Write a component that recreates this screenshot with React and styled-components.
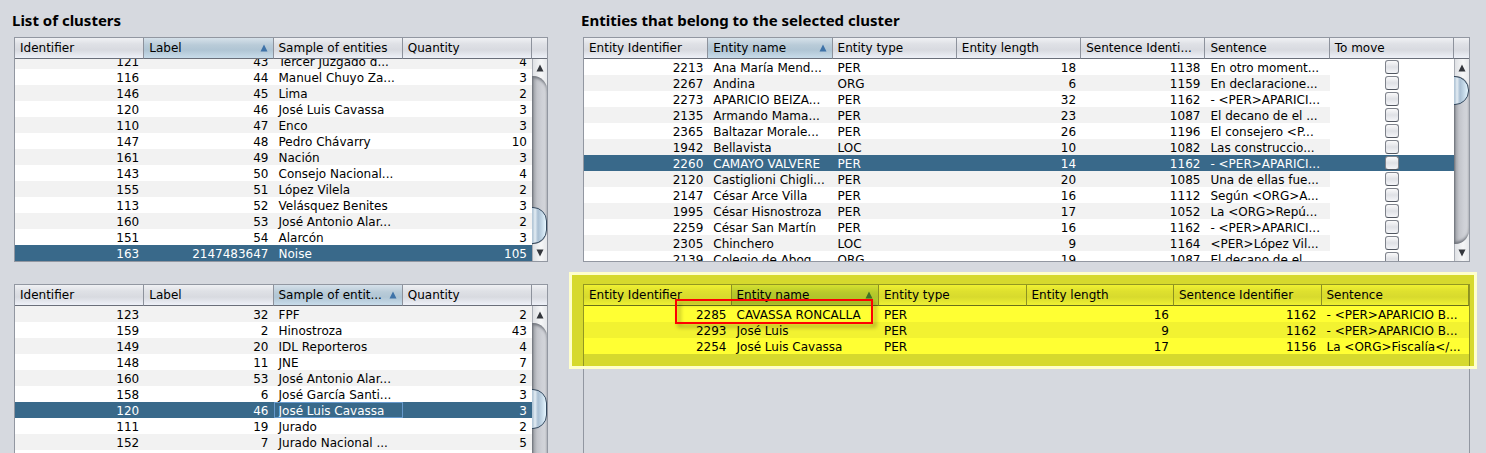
import React, { useLayoutEffect, useRef } from "react";
import styled, { createGlobalStyle, css } from "styled-components";

const GlobalStyle = createGlobalStyle`
  * { box-sizing: border-box; }
  body {
    margin: 0;
    height: 100vh;
    overflow: hidden;
    background: #d6d9df;
    color: #000;
    font: 12px/16px "DejaVu Sans", sans-serif;
  }
`;

const Page = styled.main`
  display: grid;
  grid-template-columns: 534fr 887fr;
  column-gap: 35px;
  padding: 9px 16px 0 14px;
`;

const Column = styled.section`
  display: flex;
  flex-direction: column;
  gap: 22px;
  min-width: 0;
`;

const Block = styled.div`
  display: flex;
  flex-direction: column;
`;

const Title = styled.h2`
  margin: 0 0 6px -2px;
  font: bold 15px/22px "Noto Sans", "Open Sans", sans-serif;
`;

const Pane = styled.div`
  position: relative;
  display: flex;
  height: ${(p) => p.$height}px;
  border: 1px solid #9297a1;
  background: ${(p) => (p.$plain ? "#d6d9df" : "#fff")};
`;

const Viewport = styled.div`
  flex: 1;
  min-width: 0;
  overflow: hidden;
`;

const Grid = styled.table`
  width: 100%;
  table-layout: fixed;
  border-collapse: separate;
  border-spacing: 0;
`;

const headFace = css`
  height: 21px;
  border-bottom: 1px solid #6a6f7a;
  background: linear-gradient(#f0f1f4 0%, #dfe1e6 30%, #d8dae0 60%, #eef1f8 100%);
`;

const HeadCell = styled.th`
  ${headFace}
  position: sticky;
  top: 0;
  z-index: 1;
  padding: 0 5px;
  border-right: 1px solid #8d929c;
  text-align: left;
  font-weight: normal;
  white-space: nowrap;
  ${(p) => p.$sorted && css`background: linear-gradient(#d6e1ea 0%, #b9cbd8 35%, #b0c5d4 60%, #c8dcea 100%);`}
`;

const HeadContent = styled.span`
  display: flex;
  align-items: center;
  justify-content: space-between;
  line-height: 20px;
`;

const Arrow = styled.svg`
  display: block;
  flex: none;
`;

const Row = styled.tr`
  height: 16px;
  background: ${(p) => (p.$shaded ? "#f2f2f2" : "#fff")};
  ${(p) => p.$selected && css`background: #39698a; color: #fff;`}
`;

const Cell = styled.td`
  height: 16px;
  padding: 2px 5px 0;
  text-align: ${(p) => (p.$number ? "right" : "left")};
  line-height: 14px;
  white-space: nowrap;
  ${(p) => p.$focused && css`outline: 1px solid #6699cc; outline-offset: -1px;`}
`;

const CheckCell = styled.td`
  padding: 0;
  height: 16px;
  background: ${(p) => (p.$selected ? "#39698a" : "#fff")};
  text-align: center;
`;

const Check = styled.input`
  appearance: none;
  display: block;
  width: 14px;
  height: 14px;
  margin: 1px auto;
  border: 1px solid #7f838c;
  border-bottom-color: #50555f;
  border-radius: 3px;
  background: linear-gradient(#fafafb, #dfe1e6 50%, #f4f5f8);
`;

const Side = styled.div`
  flex: none;
  display: flex;
  flex-direction: column;
  width: 15px;
  background: linear-gradient(90deg, #dcdee2, #f6f7f8 60%, #e6e8eb);
`;

const Corner = styled.div`
  ${headFace}
`;

const StepButton = styled.button`
  flex: none;
  display: flex;
  align-items: center;
  justify-content: center;
  height: 17px;
  padding: 0;
  border: 0;
  border-left: 1px solid #a9adb5;
  background: none;
`;

const Track = styled.div`
  position: relative;
  flex: 1;
  overflow: hidden;
  border-radius: 0 14px 14px 0;
  background: linear-gradient(90deg, #6f737b 0, #a5a8ae 2px, #c2c4ca 5px, #cfd1d7 10px, #d3d5da 100%);
  box-shadow: inset 0 3px 3px -1px #70747c, inset 0 -3px 3px -1px #70747c;
`;

const Thumb = styled.div`
  position: absolute;
  left: -10px;
  right: 0;
  top: ${(p) => p.$top}px;
  height: ${(p) => p.$size}px;
  border: 1px solid #34495e;
  border-radius: 0 14px 14px 0;
  background: linear-gradient(90deg, #b5c8d8 10px, #e4edf4 12px, #a9bfd3 15px, #c5d9e8 19px, #e6f6ff 23px);
`;

const Highlight = styled.div`
  position: absolute;
  z-index: 2;
  inset: -13px -8px auto -15px;
  height: 97px;
  background: #ffff33;
  mix-blend-mode: multiply;
  pointer-events: none;
`;

const HighlightEdge = styled(Highlight)`
  border: 3px solid #ffffcc;
  background: none;
  mix-blend-mode: normal;
`;

const Callout = styled.div`
  position: absolute;
  z-index: 3;
  top: 14px;
  left: 91px;
  width: 198px;
  height: 25px;
  border: 2px solid #f00;
  filter: drop-shadow(3px 3px 2px rgba(0, 0, 0, 0.4));
  pointer-events: none;
`;

function SortArrow() {
  return (
    <Arrow width="8" height="8" viewBox="0 0 8 8" aria-hidden="true">
      <path d="M4 0.5 L7.5 7.5 H0.5 Z" fill="#3f73a8" />
    </Arrow>
  );
}

function ScrollBar({ top, size }) {
  return (
    <Side>
      <Corner />
      <StepButton type="button" aria-label="Scroll up">
        <svg width="8" height="8" viewBox="0 0 8 8"><path d="M4 0.5 L7.5 7.5 H0.5 Z" fill="#33363c" /></svg>
      </StepButton>
      <Track>
        <Thumb $top={top} $size={size} />
      </Track>
      <StepButton type="button" aria-label="Scroll down">
        <svg width="8" height="8" viewBox="0 0 8 8"><path d="M4 7.5 L7.5 0.5 H0.5 Z" fill="#33363c" /></svg>
      </StepButton>
    </Side>
  );
}

function DataPane({ label, height, columns, sorted, rows, numbers, selected, focused, checks, oddShaded, atEnd, scroll, plain, children }) {
  const view = useRef(null);
  useLayoutEffect(() => {
    if (atEnd) view.current.scrollTop = view.current.scrollHeight;
  }, [atEnd]);
  return (
    <Pane $height={height} $plain={plain}>
      <Viewport ref={view}>
        <Grid aria-label={label}>
          <thead>
            <tr>
              {columns.map((name, i) => (
                <HeadCell key={name} $sorted={i === sorted} scope="col">
                  <HeadContent>
                    {name}
                    {i === sorted && <SortArrow />}
                  </HeadContent>
                </HeadCell>
              ))}
            </tr>
          </thead>
          <tbody>
            {rows.map((row, r) => (
              <Row key={row[0]} $shaded={(r % 2 === 1) === !!oddShaded} $selected={r === selected}>
                {row.map((value, c) => (
                  <Cell key={c} $number={numbers.includes(c)} $focused={r === selected && c === focused}>
                    {value}
                  </Cell>
                ))}
                {checks && (
                  <CheckCell $selected={r === selected}>
                    <Check type="checkbox" aria-label={`Move ${row[1]}`} />
                  </CheckCell>
                )}
              </Row>
            ))}
          </tbody>
        </Grid>
      </Viewport>
      {scroll && <ScrollBar {...scroll} />}
      {children}
    </Pane>
  );
}

const clusterColumns = ["Identifier", "Label", "Sample of entities", "Quantity"];

const clusters = [
  [121, 43, "Tercer Juzgado d...", 4],
  [116, 44, "Manuel Chuyo Za...", 3],
  [146, 45, "Lima", 2],
  [120, 46, "José Luis Cavassa", 3],
  [110, 47, "Enco", 3],
  [147, 48, "Pedro Chávarry", 10],
  [161, 49, "Nación", 3],
  [143, 50, "Consejo Nacional...", 4],
  [155, 51, "López Vilela", 2],
  [113, 52, "Velásquez Benites", 3],
  [160, 53, "José Antonio Alar...", 2],
  [151, 54, "Alarcón", 3],
  [163, 2147483647, "Noise", 105],
];

const targets = [
  [123, 32, "FPF", 2],
  [159, 2, "Hinostroza", 43],
  [149, 20, "IDL Reporteros", 4],
  [148, 11, "JNE", 7],
  [160, 53, "José Antonio Alar...", 2],
  [158, 6, "José García Santi...", 3],
  [120, 46, "José Luis Cavassa", 3],
  [111, 19, "Jurado", 2],
  [152, 7, "Jurado Nacional ...", 5],
];

const entities = [
  [2213, "Ana María Mend...", "PER", 18, 1138, "En otro moment..."],
  [2267, "Andina", "ORG", 6, 1159, "En declaracione..."],
  [2273, "APARICIO BEIZA...", "PER", 32, 1162, "- <PER>APARICI..."],
  [2135, "Armando Mama...", "PER", 23, 1087, "El decano de el ..."],
  [2365, "Baltazar Morale...", "PER", 26, 1196, "El consejero <P..."],
  [1942, "Bellavista", "LOC", 10, 1082, "Las construccio..."],
  [2260, "CAMAYO VALVERE", "PER", 14, 1162, "- <PER>APARICI..."],
  [2120, "Castiglioni Chigli...", "PER", 20, 1085, "Una de ellas fue..."],
  [2147, "César Arce Villa", "PER", 16, 1112, "Según <ORG>A..."],
  [1995, "César Hisnostroza", "PER", 17, 1052, "La <ORG>Repú..."],
  [2259, "César San Martín", "PER", 16, 1162, "- <PER>APARICI..."],
  [2305, "Chinchero", "LOC", 9, 1164, "<PER>López Vil..."],
  [2139, "Colegio de Abog...", "ORG", 19, 1087, "El decano de el ..."],
];

const members = [
  [2285, "CAVASSA RONCALLA", "PER", 16, 1162, "- <PER>APARICIO B..."],
  [2293, "José Luis", "PER", 9, 1162, "- <PER>APARICIO B..."],
  [2254, "José Luis Cavassa", "PER", 17, 1156, "La <ORG>Fiscalía</..."],
];

export default function App() {
  return (
    <>
      <GlobalStyle />
      <Page>
        <Column>
          <Block>
            <Title>List of clusters</Title>
            <DataPane
              label="List of clusters"
              height={225}
              columns={clusterColumns}
              sorted={1}
              rows={clusters}
              numbers={[0, 1, 3]}
              selected={12}
              atEnd
              scroll={{ top: 131, size: 37 }}
            />
          </Block>
          <DataPane
            label="Target clusters"
            height={225}
            columns={["Identifier", "Label", "Sample of entit...", "Quantity"]}
            sorted={2}
            rows={targets}
            numbers={[0, 1, 3]}
            selected={6}
            focused={2}
            scroll={{ top: 66, size: 40 }}
          />
        </Column>
        <Column>
          <Block>
            <Title>Entities that belong to the selected cluster</Title>
            <DataPane
              label="Entities of the selected cluster"
              height={225}
              columns={["Entity Identifier", "Entity name", "Entity type", "Entity length", "Sentence Identi...", "Sentence", "To move"]}
              sorted={1}
              rows={entities}
              numbers={[0, 3, 4]}
              selected={6}
              checks
              oddShaded
              scroll={{ top: 0, size: 29 }}
            />
          </Block>
          <DataPane
            label="Entities of the target cluster"
            height={225}
            columns={["Entity Identifier", "Entity name", "Entity type", "Entity length", "Sentence Identifier", "Sentence"]}
            sorted={1}
            rows={members}
            numbers={[0, 3, 4]}
            oddShaded
            plain
          >
            <Highlight />
            <HighlightEdge />
            <Callout />
          </DataPane>
        </Column>
      </Page>
    </>
  );
}
